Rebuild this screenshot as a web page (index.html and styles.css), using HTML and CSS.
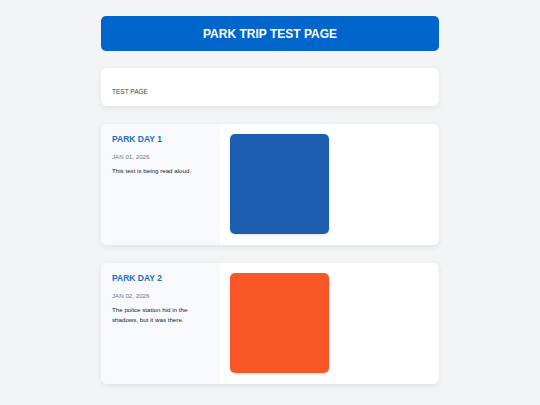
FILE: index.html
```html
<!DOCTYPE html>
<html lang="en">
<head>
  <meta charset="UTF-8" />
  <meta name="viewport" content="width=device-width, initial-scale=1" />
  <title>Park Trip Test Page</title>
  <link rel="stylesheet" href="styles.css">
</head>
<body>
  <div id="container">
    <header class="page-header">
      <h1>PARK TRIP TEST PAGE</h1>
    </header>

    <div class="card intro">
      <p>TEST PAGE</p>
    </div>

    <div class="card day">
      <div class="day-info">
        <h2>PARK DAY 1</h2>
        <div class="day-date">JAN 01, 2026</div>
        <p>This text is being read aloud.</p>
      </div>
      <div class="day-photo">
        <div class="photo blue"></div>
      </div>
    </div>

    <div class="card day">
      <div class="day-info">
        <h2>PARK DAY 2</h2>
        <div class="day-date">JAN 02, 2026</div>
        <p>The police station hid in the shadows, but it was there.</p>
      </div>
      <div class="day-photo">
        <div class="photo orange"></div>
      </div>
    </div>
  </div>
</body>
</html>
```

FILE: styles.css
```css
body {
  font-family: "Liberation Sans", Arial, sans-serif;
  background: #f3f4f6;
  margin: 0;
  padding: 16px 0;
  color: #222;
}
#container {
  width: 338px;
  margin: 0 auto;
  display: flex;
  flex-direction: column;
  gap: 17px;
}
.page-header {
  background: #0066cc;
  border-radius: 5px;
  height: 35px;
  display: flex;
  align-items: center;
  justify-content: center;
}
.page-header h1 {
  margin: 0;
  color: white;
  font-size: 12px;
  font-weight: 700;
}
.card {
  background: white;
  border-radius: 6px;
  box-shadow: 0 2px 6px rgba(0,0,0,0.08);
  overflow: hidden;
}
.intro {
  height: 38px;
  padding: 0 11px;
  box-sizing: border-box;
  display: flex;
  align-items: flex-end;
}
.intro p {
  margin: 0 0 11px;
  font-size: 6.5px;
  color: #444;
}
.day {
  display: flex;
  height: 121px;
  margin-top: 1px;
}
.day-info {
  width: 119px;
  box-sizing: border-box;
  background: #f7f9fc;
  padding: 10px 11px;
}
.day-info h2 {
  margin: 0;
  color: #1b6ec2;
  font-size: 8.5px;
  font-weight: 700;
}
.day-date {
  margin-top: 9px;
  font-size: 6.2px;
  color: #777;
}
.day-info p {
  margin: 5.5px 0 0;
  font-size: 6.2px;
  line-height: 10px;
  color: #1a1a1a;
}
.day-photo {
  flex: 1;
  padding: 10px;
}
.photo {
  width: 99px;
  height: 100px;
  border-radius: 5px;
  box-shadow: 0 1px 3px rgba(0,0,0,0.12);
}
.blue {
  background: #1d5eb0;
}
.orange {
  background: #fa5726;
}
```
